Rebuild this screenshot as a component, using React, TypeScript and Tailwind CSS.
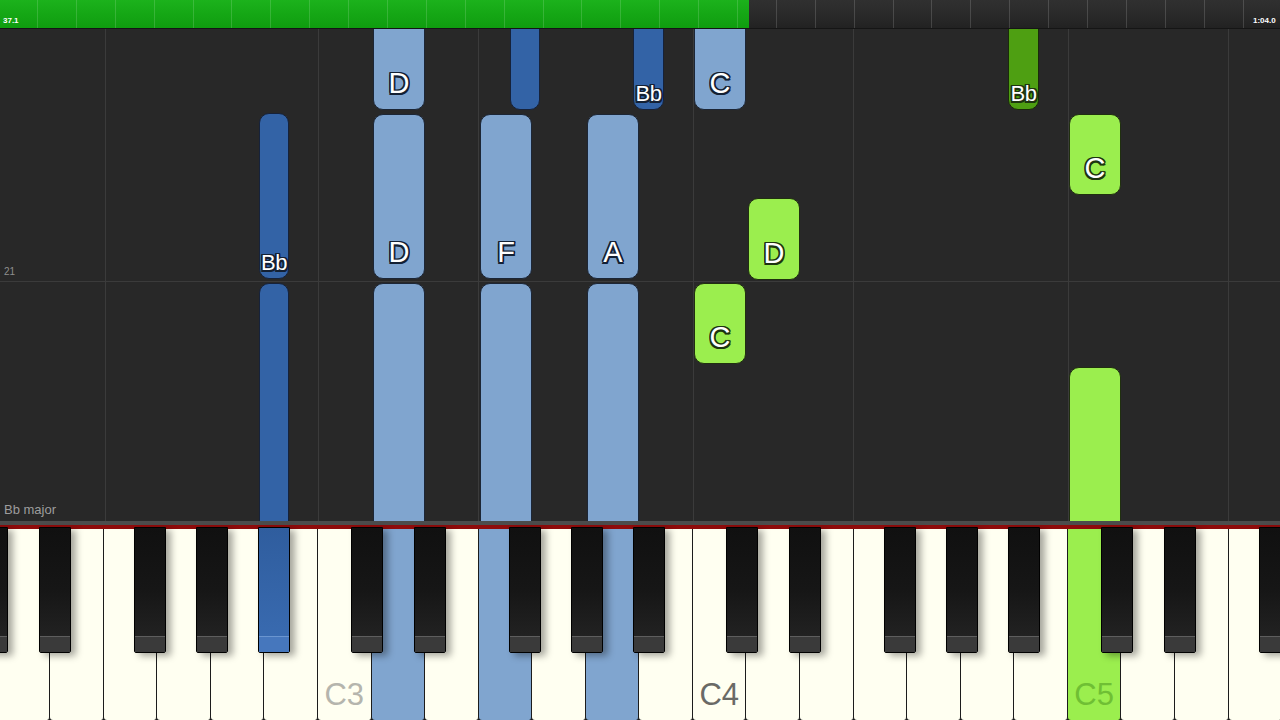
import React from "react";

type Note = {
  x: number;
  y1: number;
  y2: number;
  w: number;
  kind: "lb" | "db" | "lg" | "dg";
  label?: string;
};

const notes: Note[] = [
  // light blue
  { x: 373, y1: 18, y2: 110, w: 52, kind: "lb", label: "D" },
  { x: 373, y1: 114, y2: 279, w: 52, kind: "lb", label: "D" },
  { x: 373, y1: 283, y2: 540, w: 52, kind: "lb" },
  { x: 480, y1: 114, y2: 279, w: 52, kind: "lb", label: "F" },
  { x: 480, y1: 283, y2: 540, w: 52, kind: "lb" },
  { x: 587, y1: 114, y2: 279, w: 52, kind: "lb", label: "A" },
  { x: 587, y1: 283, y2: 540, w: 52, kind: "lb" },
  { x: 694, y1: 18, y2: 110, w: 52, kind: "lb", label: "C" },
  // dark blue
  { x: 259, y1: 113, y2: 279, w: 30, kind: "db", label: "Bb" },
  { x: 259, y1: 283, y2: 540, w: 30, kind: "db" },
  { x: 510, y1: 18, y2: 110, w: 30, kind: "db" },
  { x: 633, y1: 18, y2: 110, w: 31, kind: "db", label: "Bb" },
  // greens
  { x: 1008, y1: 18, y2: 110, w: 31, kind: "dg", label: "Bb" },
  { x: 1069, y1: 114, y2: 195, w: 52, kind: "lg", label: "C" },
  { x: 748, y1: 198, y2: 280, w: 52, kind: "lg", label: "D" },
  { x: 694, y1: 283, y2: 364, w: 52, kind: "lg", label: "C" },
  { x: 1069, y1: 367, y2: 540, w: 52, kind: "lg" },
];

const noteBg: Record<Note["kind"], string> = {
  lb: "bg-[#80a5cf] border-[#1c2636]",
  db: "bg-[#3363a6] border-[#16223a]",
  lg: "bg-[#9bee4e] border-[#20300f]",
  dg: "bg-[#4e9f12] border-[#1a2a0a]",
};

const outlineBlue =
  "[text-shadow:-1.5px_-1.5px_0_#132033,1.5px_-1.5px_0_#132033,-1.5px_1.5px_0_#132033,1.5px_1.5px_0_#132033,0_1.5px_0_#132033,0_-1.5px_0_#132033,1.5px_0_0_#132033,-1.5px_0_0_#132033]";
const outlineGreen =
  "[text-shadow:-1.5px_-1.5px_0_#1d3410,1.5px_-1.5px_0_#1d3410,-1.5px_1.5px_0_#1d3410,1.5px_1.5px_0_#1d3410,0_1.5px_0_#1d3410,0_-1.5px_0_#1d3410,1.5px_0_0_#1d3410,-1.5px_0_0_#1d3410]";

function NoteBlock({ n }: { n: Note }) {
  const narrow = n.w < 40;
  const outline = n.kind === "lg" || n.kind === "dg" ? outlineGreen : outlineBlue;
  return (
    <div
      className={`absolute border rounded-[10px] flex flex-col justify-end items-center ${noteBg[n.kind]} ${
        narrow ? "pb-[4px]" : "pb-[11px]"
      }`}
      style={{ left: n.x, top: n.y1 - 29, width: n.w, height: n.y2 - n.y1 }}
    >
      {n.label && (
        <span
          className={`text-white leading-none ${outline} ${
            narrow ? "text-[22px] tracking-[-0.5px]" : "text-[29px]"
          }`}
        >
          {n.label}
        </span>
      )}
    </div>
  );
}

type WKey = { name: string; cls: string; label?: string; labelCls?: string };

const whiteKeys: WKey[] = [
  "D2","E2","F2","G2","A2","B2","C3","D3","E3","F3","G3","A3","B3","C4","D4","E4","F4","G4","A4","B4","C5","D5","E5","F5","G5",
].map((name) => {
  if (name === "D3" || name === "F3" || name === "A3")
    return { name, cls: "bg-[#80a5cf]" };
  if (name === "C5")
    return { name, cls: "bg-[#9bee4e]", label: "C5", labelCls: "text-[#6fbf34]" };
  if (name === "C3") return { name, cls: "bg-[#fffff1]", label: "C3", labelCls: "text-[#b5b5ad]" };
  if (name === "C4") return { name, cls: "bg-[#fffff1]", label: "C4", labelCls: "text-[#6a6a66]" };
  return { name, cls: "bg-[#fffff1]" };
});

const octaveCs = [-57.4, 317.6, 692.6, 1067.6];
const blackOffsets = [33, 96, 191, 253, 315];
const blackKeys: { x: number; pressed: boolean }[] = [];
octaveCs.forEach((c, oi) => {
  blackOffsets.forEach((o, bi) => {
    const x = c + o;
    if (x < 1290) blackKeys.push({ x, pressed: oi === 0 && bi === 4 });
  });
});

const ticks = Array.from({ length: 33 }, (_, i) => i);

export default function App() {
  return (
    <div className="w-[1280px] h-[720px] overflow-hidden bg-[#282828] flex flex-col font-['Liberation_Sans',Arial,sans-serif] select-none">
      {/* Top progress bar */}
      <div className="relative h-[29px] shrink-0 bg-gradient-to-b from-[#303030] via-[#2a2a2a] to-[#222222] border-b border-[#151515] overflow-hidden">
        <div className="absolute left-0 top-0 bottom-0 w-[749px] bg-gradient-to-b from-[#1cb21c] via-[#15a715] to-[#0f9d0f]" />
        <div className="absolute inset-0 flex">
          <div className="w-[37px] shrink-0" />
          {ticks.map((t) => (
            <div key={t} className="w-[38.9px] shrink-0 border-l border-white/15" />
          ))}
        </div>
        <span className="absolute left-[3px] top-[17px] text-[8px] leading-none font-bold text-white">37.1</span>
        <span className="absolute left-[1253px] top-[17px] text-[8px] leading-none font-bold text-white whitespace-nowrap">1:04.0</span>
      </div>

      {/* Note roll */}
      <div className="relative flex-1 bg-[#282828] overflow-hidden">
        {[105, 318, 478, 693, 853, 1068, 1228].map((x) => (
          <div key={x} className="absolute top-0 bottom-0 w-px bg-[#3b3b3b]" style={{ left: x }} />
        ))}
        <div className="absolute left-0 right-0 top-[252px] h-px bg-[#3b3b3b]" />
        <span className="absolute left-[4px] top-[238px] text-[10px] leading-none text-[#8e8e8e]">21</span>
        {notes.map((n, i) => (
          <NoteBlock key={i} n={n} />
        ))}
        <span className="absolute left-[4px] bottom-[5px] text-[13px] leading-none text-[#9d9d9d]">Bb major</span>
      </div>

      {/* separator band */}
      <div className="h-[4px] shrink-0 bg-[#4c4c4c]" />

      {/* Keyboard */}
      <div className="relative h-[195px] shrink-0 border-t-4 border-[#8e0b0b] bg-[#1a1a1a]">
        <div className="flex h-full ml-[-3.4px]">
          {whiteKeys.map((k) => (
            <div
              key={k.name}
              className={`relative w-[53.57px] shrink-0 h-full box-border border-r-[1.5px] border-[#1c1c1c] rounded-b-[3px] flex items-end justify-center pb-[10px] ${k.cls}`}
            >
              {k.label && (
                <span className={`text-[31px] leading-none ${k.labelCls}`}>{k.label}</span>
              )}
            </div>
          ))}
        </div>
        {blackKeys.map((b, i) => (
          <div
            key={i}
            className={`absolute top-[-2px] w-[32px] h-[126px] border border-black rounded-b-[2px] flex flex-col shadow-[5px_3px_7px_rgba(0,0,0,0.35)] ${
              b.pressed ? "bg-gradient-to-b from-[#2f5d9e] to-[#3a6cb2]" : "bg-gradient-to-b from-[#101010] via-[#161616] to-[#262626]"
            }`}
            style={{ left: b.x }}
          >
            <div className="flex-1" />
            <div
              className={`h-[16px] border-t ${
                b.pressed ? "bg-[#4677bd] border-[#6a95d0]" : "bg-[#3a3a3a] border-[#5e5e5e]"
              }`}
            />
          </div>
        ))}
      </div>
    </div>
  );
}
